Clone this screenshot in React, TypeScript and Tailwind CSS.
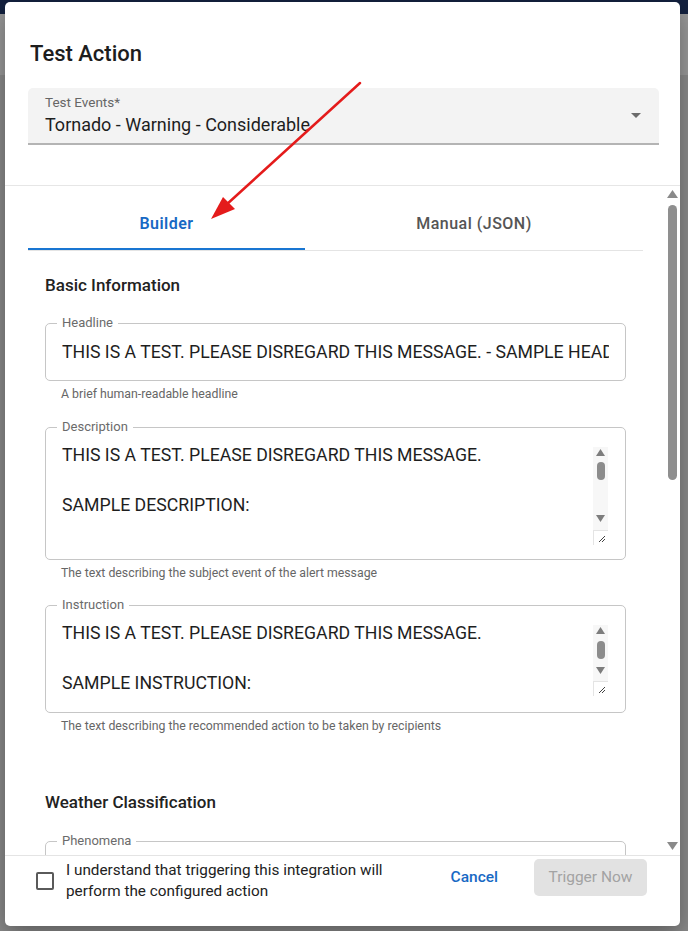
import React from "react";

const Tri = ({ dir, color = "#7d7d7d", w = 9, h = 6 }: { dir: "up" | "down"; color?: string; w?: number; h?: number }) => (
  <svg width={w} height={h} viewBox={`0 0 ${w} ${h}`} className="block">
    <polygon
      points={dir === "up" ? `${w / 2},0 ${w},${h} 0,${h}` : `0,0 ${w},0 ${w / 2},${h}`}
      fill={color}
    />
  </svg>
);

const Grip = () => (
  <div className="w-[15px] h-[15px] bg-white border-l border-t border-[#e4e4e4] flex items-end justify-end">
    <svg width="10" height="10" viewBox="0 0 10 10" className="block mb-[2px] mr-[2px]">
      <line x1="9" y1="3" x2="3" y2="9" stroke="#444" strokeWidth="1" />
      <line x1="9" y1="6" x2="6" y2="9" stroke="#444" strokeWidth="1" />
    </svg>
  </div>
);

// scrollbar drawn inside a textarea
const AreaScroll = ({
  height,
  thumbTop,
  downTop,
}: {
  height: number;
  thumbTop: number;
  downTop: number;
}) => (
  <div className="w-[15px] flex flex-col shrink-0" style={{ height }}>
    <div className="flex-1 bg-[#f7f7f7] flex flex-col items-center">
      <div className="mt-[2px]">
        <Tri dir="up" w={9} h={7} />
      </div>
      <div
        className="w-[8px] h-[18px] rounded-full bg-[#8c8c8c]"
        style={{ marginTop: thumbTop - 9 }}
      />
      <div style={{ marginTop: downTop - thumbTop - 18 - 3 }}>
        <Tri dir="down" w={9} h={7} />
      </div>
    </div>
    <Grip />
  </div>
);

const Outlined = ({
  label,
  children,
  className = "",
}: {
  label: string;
  children: React.ReactNode;
  className?: string;
}) => (
  <div className={`relative border border-[#c6c6c6] rounded-[5px] ${className}`}>
    <span className="absolute -top-[9px] left-[11px] px-[5px] bg-white text-[13px] leading-[16px] text-[#6b6b6b]">
      {label}
    </span>
    {children}
  </div>
);

const Helper = ({ children }: { children: React.ReactNode }) => (
  <p className="mt-[5px] pl-[16px] text-[12.3px] leading-[16px] text-[#666]">{children}</p>
);

export default function App() {
  return (
    <div className="w-[688px] h-[931px] overflow-hidden bg-[linear-gradient(to_bottom,#13213f_0px,#13213f_14px,#9a9a9a_14px,#9a9a9a_75px,#8b8b8b_75px)] pt-[2px] pl-[5px] font-['Roboto',sans-serif] relative">
      <div className="w-[675px] h-[924px] bg-white rounded-[5px] shadow-[0_8px_24px_rgba(0,0,0,0.35)] flex flex-col overflow-hidden">
        {/* header */}
        <div className="h-[184px] shrink-0 border-b border-[#e6e6e6] pl-[23px] pr-[21px] pt-[36px]">
          <h2 className="text-[22px] leading-[32px] font-medium text-[#1d1d1d] pl-[2px]">Test Action</h2>
          <div className="mt-[18px] h-[57px] bg-[#f3f3f3] rounded-t-[5px] border-b-[2px] border-[#b4b4b4] flex items-center pl-[17px] pr-[18px]">
            <div className="flex-1">
              <div className="text-[13.5px] leading-[16px] text-[#666]">Test Events*</div>
              <div className="mt-[3px] text-[18px] leading-[24px] text-[#1e1e1e]">
                Tornado - Warning - Considerable
              </div>
            </div>
            <Tri dir="down" color="#6b6b6b" w={10} h={5} />
          </div>
        </div>

        {/* scrolling body */}
        <div className="flex-1 flex overflow-hidden">
          <div className="flex-1 px-[23px] pt-[14px] overflow-hidden">
            <div className="flex h-[51px] border-b border-[#e4e4e4]">
              <div className="w-[277px] flex items-center justify-center border-b-[2px] border-[#1976d2] text-[16px] font-semibold tracking-[0.03em] text-[#1769c4]">
                Builder
              </div>
              <div className="flex-1 flex items-center justify-center text-[16px] font-medium tracking-[0.03em] text-[#555] pb-[2px]">
                Manual (JSON)
              </div>
            </div>

            <div className="px-[17px]">
              <h3 className="mt-[22px] text-[17px] leading-[24px] font-medium text-[#222]">Basic Information</h3>

              <Outlined label="Headline" className="mt-[26px] h-[58px] flex items-center">
                <div className="mx-[16px] flex-1 overflow-hidden whitespace-nowrap text-[17.7px] text-[#1e1e1e]">
                  THIS IS A TEST. PLEASE DISREGARD THIS MESSAGE. - SAMPLE HEADLINE
                </div>
              </Outlined>
              <Helper>A brief human-readable headline</Helper>

              <Outlined label="Description" className="mt-[25px] h-[133px] flex">
                <div className="flex-1 pl-[16px] pt-[15px] text-[17.7px] leading-[25px] text-[#1e1e1e]">
                  <div>THIS IS A TEST. PLEASE DISREGARD THIS MESSAGE.</div>
                  <div>&nbsp;</div>
                  <div>SAMPLE DESCRIPTION:</div>
                </div>
                <div className="mt-[19px] mr-[17px]">
                  <AreaScroll height={98} thumbTop={15} downTop={71} />
                </div>
              </Outlined>
              <Helper>The text describing the subject event of the alert message</Helper>

              <Outlined label="Instruction" className="mt-[24px] h-[108px] flex">
                <div className="flex-1 pl-[16px] pt-[15px] text-[17.7px] leading-[25px] text-[#1e1e1e]">
                  <div>THIS IS A TEST. PLEASE DISREGARD THIS MESSAGE.</div>
                  <div>&nbsp;</div>
                  <div>SAMPLE INSTRUCTION:</div>
                </div>
                <div className="mt-[19px] mr-[17px]">
                  <AreaScroll height={71} thumbTop={16} downTop={45} />
                </div>
              </Outlined>
              <Helper>The text describing the recommended action to be taken by recipients</Helper>

              <h3 className="mt-[56px] text-[17px] leading-[24px] font-medium text-[#222]">Weather Classification</h3>

              <Outlined label="Phenomena" className="mt-[27px] h-[58px]">
                <div />
              </Outlined>
            </div>
          </div>

          {/* main scrollbar */}
          <div className="w-[12px] mr-[2px] flex flex-col items-center">
            <div className="mt-[4px]">
              <Tri dir="up" color="#8a8a8a" w={11} h={8} />
            </div>
            <div className="mt-[7px] w-[9px] h-[275px] rounded-full bg-[#8f8f8f]" />
            <div className="flex-1" />
            <div className="mb-[5px]">
              <Tri dir="down" color="#8a8a8a" w={11} h={8} />
            </div>
          </div>
        </div>

        {/* footer */}
        <div className="h-[71px] shrink-0 border-t border-[#e4e4e4] flex items-start pt-[3px] pl-[31px] pr-[33px]">
          <div className="flex items-center h-[42px] mt-[1px]">
            <div className="w-[18px] h-[18px] rounded-[2px] border-[2px] border-[#5a5a5a]" />
            <p className="ml-[12px] text-[15.3px] leading-[21px] text-[#222]">
              I understand that triggering this integration will
              <br />
              perform the configured action
            </p>
          </div>
          <div className="ml-auto flex items-center h-[37px]">
            <span className="text-[15.5px] font-medium text-[#1769c4]">Cancel</span>
            <div className="ml-[36px] w-[113px] h-[37px] rounded-[5px] bg-[#e2e2e2] flex items-center justify-center text-[15.5px] text-[#a3a3a3]">
              Trigger Now
            </div>
          </div>
        </div>
      </div>

      {/* red annotation arrow */}
      <svg className="absolute inset-0 pointer-events-none" width="688" height="931" viewBox="0 0 688 931">
        <line x1="360" y1="83" x2="226" y2="205" stroke="#e41b1b" strokeWidth="2.5" strokeLinecap="round" />
        <polygon points="211,219 223,197 235,209" fill="#e41b1b" />
      </svg>
    </div>
  );
}
